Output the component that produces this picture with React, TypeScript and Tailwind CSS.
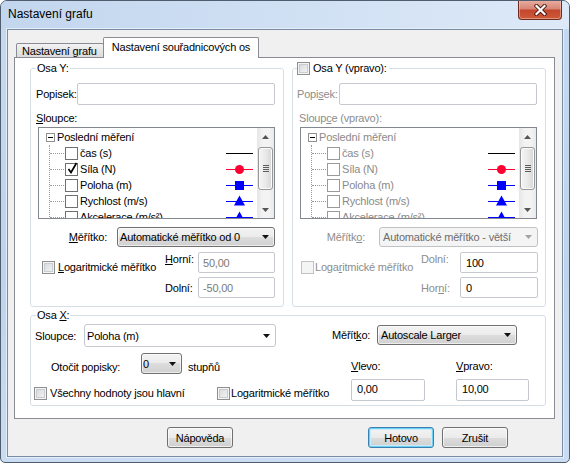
import React from "react";

const font = "font-['Liberation_Sans',Arial,sans-serif]";

function Check({ disabled, className = "" }: { disabled?: boolean; className?: string }) {
  return (
    <span
      className={`block w-[13px] h-[13px] shrink-0 border ${
        disabled
          ? "border-[#c2c2c2] bg-[#f4f4f4]"
          : "border-[#8e8f8f] bg-[linear-gradient(135deg,#d2d5d9,#f8f8f8)] shadow-[inset_0_0_0_1px_#f4f4f4,inset_0_0_0_2px_#c8cbcf]"
      } ${className}`}
    />
  );
}

function TreeCheck({ checked, dim }: { checked?: boolean; dim?: boolean }) {
  return (
    <span
      className={`relative block w-[13px] h-[13px] shrink-0 border bg-white ${
        dim ? "border-[#9a9a9a]" : "border-[#707070]"
      }`}
    >
      {checked && (
        <svg width="11" height="12" viewBox="0 0 11 12" className="absolute left-[1px] -top-[2px]">
          <path d="M1.5 7 L4 10.5 L9.5 1" fill="none" stroke="#000" strokeWidth="1.7" />
        </svg>
      )}
    </span>
  );
}

function Marker({ kind }: { kind: "line" | "circle" | "square" | "tri" }) {
  const c = kind === "line" ? "#000" : kind === "circle" ? "#ff0033" : "#0000ff";
  return (
    <svg width="27" height="13" viewBox="0 0 27 13" className="block shrink-0">
      <line x1="0" y1="6.5" x2="27" y2="6.5" stroke={c} strokeWidth="1" />
      {kind === "circle" && <circle cx="13.5" cy="6.5" r="4.5" fill={c} />}
      {kind === "square" && <rect x="9" y="2" width="9" height="9" fill={c} />}
      {kind === "tri" && <polygon points="13.5,0.5 19,10.5 8,10.5" fill={c} />}
    </svg>
  );
}

function Arrow({ up, color = "#3c3c3c" }: { up?: boolean; color?: string }) {
  return (
    <svg width="7" height="4" viewBox="0 0 7 4" className="block">
      <path d={up ? "M0 4 L3.5 0 L7 4Z" : "M0 0 L7 0 L3.5 4Z"} fill={color} />
    </svg>
  );
}

function Scroll() {
  return (
    <div className="w-[17px] shrink-0 flex flex-col items-center bg-[linear-gradient(90deg,#e6e6e6,#f3f3f3_35%,#f3f3f3_70%,#e9e9e9)]">
      <div className="h-[17px] flex items-center justify-center">
        <Arrow up color="#555" />
      </div>
      <div className="mt-[2px] w-[15px] h-[43px] rounded-[3px] border border-[#979797] bg-[linear-gradient(90deg,#f5f5f5,#e9e9e9_50%,#d6d6d6)] shadow-[inset_0_0_0_1px_#fbfbfb] flex flex-col items-center justify-center gap-[1px]">
        {[0, 1, 2, 3].map((i) => (
          <span key={i} className="block w-[6px] h-[1px] bg-[#5c5c5c]" />
        ))}
      </div>
      <div className="mt-auto h-[17px] flex items-center justify-center">
        <Arrow color="#555" />
      </div>
    </div>
  );
}

const rows: { name: string; kind: "line" | "circle" | "square" | "tri"; checked?: boolean }[] = [
  { name: "čas (s)", kind: "line" },
  { name: "Síla (N)", kind: "circle", checked: true },
  { name: "Poloha (m)", kind: "square" },
  { name: "Rychlost (m/s)", kind: "tri" },
  { name: "Akcelerace (m/s²)", kind: "tri" },
];

function Tree({ dim }: { dim?: boolean }) {
  const tc = dim ? "text-[#8a8a8a]" : "text-black";
  return (
    <div className="w-[237px] h-[92px] border border-[#828790] bg-white flex overflow-hidden">
      <div className="flex-1 min-w-0 flex flex-col pt-[1px]">
        <div className="h-[16px] shrink-0 flex items-center pl-[7px]">
          <span className="w-[9px] h-[9px] border border-[#919191] bg-white flex items-center justify-center">
            <span className="block w-[5px] h-[1px] bg-black" />
          </span>
          <span className={`ml-[2px] ${tc}`}>Poslední měření</span>
        </div>
        <div className="ml-[10px] flex-1 border-l border-dotted border-[#9a9a9a] flex flex-col">
          {rows.map((r) => (
            <div key={r.name} className="h-[16px] shrink-0 flex items-center">
              <span className="block w-[14px] border-t border-dotted border-[#9a9a9a]" />
              <span className="ml-[1px]">
                <TreeCheck checked={!dim && r.checked} dim={dim} />
              </span>
              <span className={`ml-[2px] whitespace-nowrap ${tc}`}>{r.name}</span>
              <span className="ml-auto mr-[4px]">
                <Marker kind={r.kind} />
              </span>
            </div>
          ))}
        </div>
      </div>
      <Scroll />
    </div>
  );
}

function Field({ className = "", value = "", muted, top }: { className?: string; value?: string; muted?: boolean; top?: boolean }) {
  return (
    <div
      className={`shrink-0 border border-[#c5c9cf] rounded-[2px] bg-white flex pl-[4px] ${
        top ? "items-start pt-[2px]" : "items-center"
      } ${muted ? "text-[#7a7a7a]" : "text-black"} ${className}`}
    >
      {value}
    </div>
  );
}

function Combo({
  className = "",
  children,
  disabled,
  white,
}: {
  className?: string;
  children: React.ReactNode;
  disabled?: boolean;
  white?: boolean;
}) {
  const skin = disabled
    ? "border-[#c0c3c6] bg-[#f4f4f4] text-[#6d6d6d]"
    : white
    ? "border-[#c5c9cf] bg-white rounded-[2px]"
    : "border-[#707070] bg-[linear-gradient(#f3f3f3,#ebebeb_50%,#dddddd_50%,#d0d0d0)] shadow-[inset_0_0_0_1px_rgba(255,255,255,0.6)]";
  return (
    <div className={`shrink-0 flex items-center border rounded-[3px] ${skin} ${className}`}>
      <span className="flex-1 whitespace-nowrap overflow-hidden">{children}</span>
      <span className="mr-[5px]">
        <Arrow color={disabled ? "#a3a3a3" : "#111"} />
      </span>
    </div>
  );
}

function Button({ children, primary }: { children: React.ReactNode; primary?: boolean }) {
  return (
    <div
      className={`w-[66px] h-[21px] shrink-0 flex items-center justify-center rounded-[3px] border bg-[linear-gradient(#f3f3f3,#ebebeb_50%,#dddddd_50%,#cfcfcf)] ${
        primary
          ? "border-[#3c7fb1] shadow-[inset_0_0_0_1px_#6fd0f6,inset_0_0_0_2px_#c8ecfb]"
          : "border-[#707070] shadow-[inset_0_0_0_1px_rgba(255,255,255,0.65)]"
      }`}
    >
      {children}
    </div>
  );
}

function Group({
  className = "",
  legend,
  legendClass = "left-[5px] px-[1px]",
  children,
}: {
  className?: string;
  legend: React.ReactNode;
  legendClass?: string;
  children: React.ReactNode;
}) {
  return (
    <div className={`relative shrink-0 border border-[#d5dfe5] rounded-[3px] ${className}`}>
      <div className={`absolute -top-[8px] h-[14px] bg-white flex items-center ${legendClass}`}>{legend}</div>
      {children}
    </div>
  );
}

function CloseButton() {
  return (
    <div className="ml-auto mr-[7px] -mt-px w-[44px] h-[20px] shrink-0 rounded-b-[4px] border border-t-0 border-[#6e2a1e] bg-[linear-gradient(#eab0a3,#d88776_45%,#c4472d_55%,#cd5a38)] shadow-[inset_0_0_0_1px_rgba(255,220,210,0.45)] flex items-center justify-center">
      <svg width="13" height="12" viewBox="0 0 13 12">
        <path d="M2.5 2 L10.5 10 M10.5 2 L2.5 10" stroke="#4a1a12" strokeWidth="4" strokeLinecap="square" />
        <path d="M2.5 2 L10.5 10 M10.5 2 L2.5 10" stroke="#fff" strokeWidth="2.2" strokeLinecap="square" />
      </svg>
    </div>
  );
}

export default function App() {
  const gray = "text-[#8d8d8d]";
  return (
    <div
      className={`${font} text-[11px] leading-[14px] tracking-[-0.2px] text-black w-[570px] h-[463px] border border-[#4f5d6e] rounded-t-[7px] rounded-b-[5px] bg-[linear-gradient(#c6d9ef,#bed4ec_60%,#c9dcf1)] flex flex-col overflow-hidden`}
    >
      {/* Title bar */}
      <div className="h-[28px] shrink-0 flex items-start bg-[linear-gradient(90deg,#c2d6ee,#d1e1f4_55%,#dde9f7)]">
        <span className="pl-[7px] pt-[6px] text-[12px] leading-[15px] tracking-normal">Nastavení grafu</span>
        <CloseButton />
      </div>

      {/* Client area */}
      <div className="mx-[6px] h-[428px] shrink-0 border border-[#7a8ca3] bg-[#f0f0f0] pt-[7px] pl-[6px] shadow-[0_0_0_1px_#e4edf8]">
        {/* Tabs */}
        <div className="h-[20px] flex items-end">
          <div className="ml-[2px] w-[88px] h-[14px] border border-b-0 border-[#898c95] rounded-t-[2px] bg-[linear-gradient(#f3f3f3,#e6e6e6_50%,#dcdcdc)] flex items-center pl-[5px] whitespace-nowrap">
            Nastavení grafu
          </div>
          <div className="-ml-px -mb-px relative z-10 w-[156px] h-[21px] border border-b-0 border-[#898c95] rounded-t-[2px] bg-white flex justify-center pt-[2px] whitespace-nowrap">
            Nastavení souřadnicových os
          </div>
        </div>

        {/* Tab page */}
        <div className="w-[541px] h-[362px] border border-[#898c95] bg-white pl-[15px] pt-[10px]">
          <div className="flex gap-[8px]">
            {/* Osa Y */}
            <Group className="w-[254px] h-[239px]" legend={<span>Osa Y:</span>}>
              <div className="flex flex-col pt-[14px]">
                <div className="flex items-center pl-[5px]">
                  <span className="w-[41px]">Popisek:</span>
                  <Field className="w-[198px] h-[22px]" />
                </div>
                <span className="mt-[6px] pl-[5px]">
                  <u>S</u>loupce:
                </span>
                <div className="mt-[2px] ml-[7px]">
                  <Tree />
                </div>
                <div className="mt-[8px] flex items-center justify-end pr-[8px]">
                  <span className="mr-[10px]">
                    <u>M</u>ěřítko:
                  </span>
                  <Combo className="w-[158px] h-[20px] pl-[2px]">Automatické měřítko od 0</Combo>
                </div>
                <div className="mt-[5px] flex">
                  <div className="pl-[11px] pt-[8px] flex items-center self-start">
                    <Check />
                    <span className="ml-[3px] whitespace-nowrap">
                      <u>L</u>ogaritmické měřítko
                    </span>
                  </div>
                  <div className="ml-auto mr-[8px] flex flex-col gap-[4px]">
                    <div className="flex items-start">
                      <span className="w-[33px]">
                        <u>H</u>orní:
                      </span>
                      <Field className="w-[77px] h-[21px]" value="50,00" muted />
                    </div>
                    <div className="flex items-center">
                      <span className="w-[33px]">Dolní:</span>
                      <Field className="w-[77px] h-[21px]" value="-50,00" muted />
                    </div>
                  </div>
                </div>
              </div>
            </Group>

            {/* Osa Y (vpravo) */}
            <Group
              className="w-[254px] h-[239px]"
              legendClass="left-[4px] pr-[2px]"
              legend={
                <>
                  <Check />
                  <span className="ml-[3px]">Osa Y (vpravo):</span>
                </>
              }
            >
              <div className="flex flex-col pt-[14px]">
                <div className="flex items-center pl-[4px]">
                  <span className={`w-[42px] ${gray}`}>
                    Popi<u>s</u>ek:
                  </span>
                  <Field className="w-[198px] h-[22px]" />
                </div>
                <span className={`mt-[6px] pl-[6px] ${gray}`}>
                  Sloup<u>c</u>e (vpravo):
                </span>
                <div className="mt-[2px] ml-[7px]">
                  <Tree dim />
                </div>
                <div className="mt-[8px] flex items-center justify-end pr-[7px]">
                  <span className={`mr-[14px] ${gray}`}>
                    Měřítk<u>o</u>:
                  </span>
                  <Combo disabled className="w-[159px] h-[20px] pl-[3px]">
                    Automatické měřítko - větší
                  </Combo>
                </div>
                <div className="mt-[5px] flex">
                  <div className="pl-[8px] pt-[8px] flex items-center self-start">
                    <Check disabled />
                    <span className={`ml-[1px] whitespace-nowrap ${gray}`}>
                      Loga<u>r</u>itmické měřítko
                    </span>
                  </div>
                  <div className="ml-auto mr-[7px] flex flex-col gap-[4px]">
                    <div className="flex items-start">
                      <span className={`w-[39px] ${gray}`}>Dolní:</span>
                      <Field className="w-[78px] h-[21px] pl-[5px]" value="100" />
                    </div>
                    <div className="flex items-center">
                      <span className={`w-[39px] ${gray}`}>
                        Hor<u>n</u>í:
                      </span>
                      <Field className="w-[78px] h-[21px] pl-[5px]" value="0" />
                    </div>
                  </div>
                </div>
              </div>
            </Group>
          </div>

          {/* Osa X */}
          <Group
            className="mt-[8px] w-[516px] h-[91px]"
            legend={
              <span>
                Osa <u>X</u>:
              </span>
            }
          >
            <div className="flex pt-[8px]">
              <div className="w-[300px] shrink-0 flex flex-col">
                <div className="flex items-center pl-[4px]">
                  <span className="w-[49px]">Sloupce:</span>
                  <Combo white className="w-[192px] h-[23px] pl-[2px]">
                    Poloha (m)
                  </Combo>
                </div>
                <div className="mt-[6px] flex items-end pl-[20px]">
                  <span className="w-[90px]">Otočit popisky:</span>
                  <Combo className="w-[41px] h-[21px] pl-[1px]">0</Combo>
                  <span className="ml-[6px]">stupňů</span>
                </div>
                <div className="mt-[12px] flex items-center pl-[3px]">
                  <div className="w-[183px] flex items-center">
                    <Check />
                    <span className="ml-[3px] whitespace-nowrap">Všechny hodnoty jsou hlavní</span>
                  </div>
                  <Check />
                  <span className="ml-[1px] whitespace-nowrap">
                    Lo<u>g</u>aritmické měřítko
                  </span>
                </div>
              </div>
              <div className="flex-1 flex flex-col">
                <div className="mt-[1px] flex items-center pl-[1px]">
                  <span className="w-[45px]">
                    Měřít<u>k</u>o:
                  </span>
                  <Combo className="w-[140px] h-[20px] pl-[3px]">Autoscale Larger</Combo>
                </div>
                <div className="mt-[14px] flex pl-[20px]">
                  <div className="w-[105px] flex flex-col">
                    <span>
                      <u>V</u>levo:
                    </span>
                    <Field top className="mt-[6px] w-[74px] h-[22px] pl-[5px]" value="0,00" />
                  </div>
                  <div className="flex flex-col">
                    <span>
                      <u>V</u>pravo:
                    </span>
                    <Field top className="mt-[6px] w-[73px] h-[22px] pl-[5px]" value="10,00" />
                  </div>
                </div>
              </div>
            </div>
          </Group>
        </div>

        {/* Buttons */}
        <div className="mt-[8px] flex">
          <div className="ml-[153px]">
            <Button>Nápověda</Button>
          </div>
          <div className="ml-[135px]">
            <Button primary>Hotovo</Button>
          </div>
          <div className="ml-[8px]">
            <Button>Zrušit</Button>
          </div>
        </div>
      </div>
    </div>
  );
}
